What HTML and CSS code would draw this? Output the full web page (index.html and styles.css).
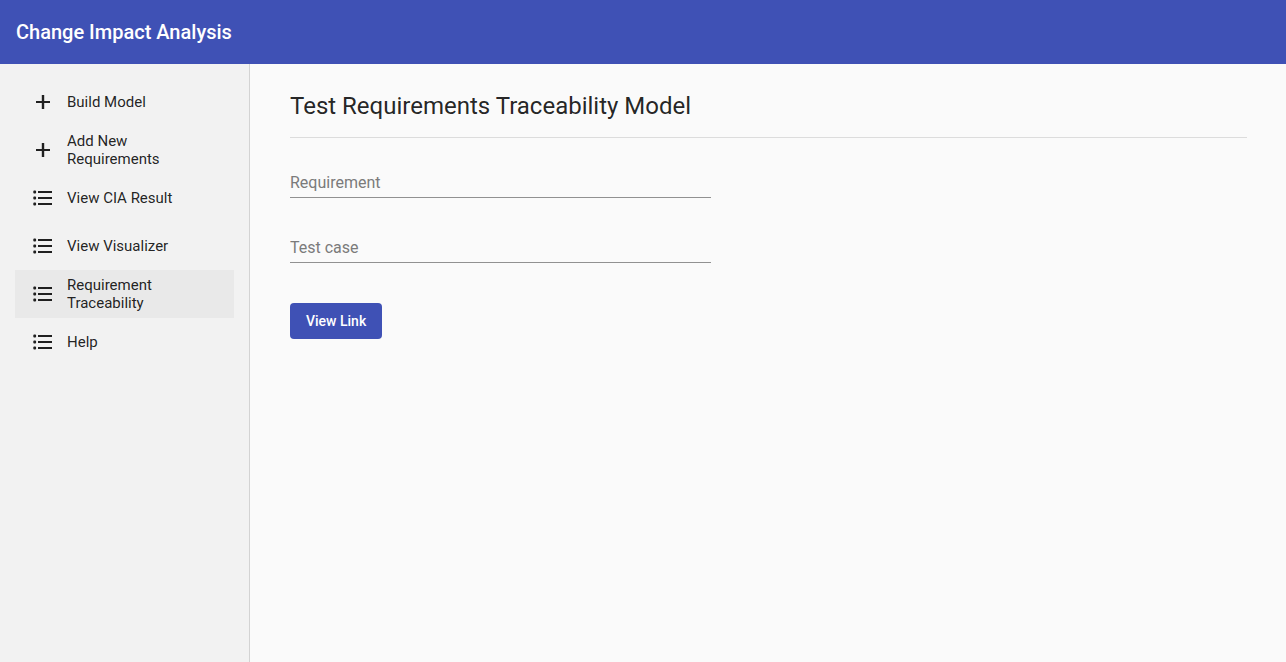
FILE: index.html
```
<!DOCTYPE html>
<html lang="en">
<head>
<meta charset="utf-8">
<meta name="viewport" content="width=device-width, initial-scale=1">
<title>Change Impact Analysis</title>
<link rel="stylesheet" href="styles.css">
</head>
<body>
<svg class="sprite" aria-hidden="true">
  <symbol id="icon-add" viewBox="0 0 24 24"><path d="M19 13h-5.8v6h-2.4v-6H5v-2h5.800V5h2.400v6H19v2z"/></symbol>
  <symbol id="icon-list" viewBox="0 0 24 24"><path d="M2.300 5.200l.6-.7h1.600l.6.7v1.600l-.6.7H2.900l-.6-.7zm0 6l.6-.7h1.600l.6.7v1.600l-.6.7H2.900l-.6-.7zm0 6l.6-.7h1.600l.6.7v1.600l-.6.7H2.900l-.6-.7zM7 19h14v-2H7v2zm0-6h14v-2H7v2zm0-8v2h14V5H7z"/></symbol>
</svg>
<header class="toolbar">
  <h1 class="toolbar-title">Change Impact Analysis</h1>
</header>
<div class="layout">
  <nav class="sidenav" aria-label="Main">
    <a class="nav-item" href="#build"><svg class="icon" aria-hidden="true"><use href="#icon-add"/></svg><span class="nav-label">Build Model</span></a>
    <a class="nav-item" href="#add"><svg class="icon" aria-hidden="true"><use href="#icon-add"/></svg><span class="nav-label">Add New Requirements</span></a>
    <a class="nav-item" href="#result"><svg class="icon" aria-hidden="true"><use href="#icon-list"/></svg><span class="nav-label">View CIA Result</span></a>
    <a class="nav-item" href="#visualizer"><svg class="icon" aria-hidden="true"><use href="#icon-list"/></svg><span class="nav-label">View Visualizer</span></a>
    <a class="nav-item nav-item-active" href="#traceability" aria-current="page"><svg class="icon" aria-hidden="true"><use href="#icon-list"/></svg><span class="nav-label">Requirement Traceability</span></a>
    <a class="nav-item" href="#help"><svg class="icon" aria-hidden="true"><use href="#icon-list"/></svg><span class="nav-label">Help</span></a>
  </nav>
  <main class="content">
    <h2 class="page-title">Test Requirements Traceability Model</h2>
    <form class="trace-form">
      <input class="field" type="text" placeholder="Requirement" aria-label="Requirement">
      <input class="field" type="text" placeholder="Test case" aria-label="Test case">
      <button class="button" type="button">View Link</button>
    </form>
  </main>
</div>
</body>
</html>
```
FILE: styles.css
```
* { box-sizing: border-box; }

body {
  display: flex;
  flex-direction: column;
  min-height: 100vh;
  margin: 0;
  background: #fafafa;
  color: rgba(0, 0, 0, 0.87);
  font-family: Roboto, sans-serif;
}

.sprite { display: none; }

.toolbar {
  display: flex;
  align-items: center;
  height: 64px;
  padding: 0 16px;
  background: #3f51b5;
  color: #fff;
}

.toolbar-title {
  margin: 0;
  font-size: 20px;
  font-weight: 500;
  line-height: 32px;
}

.layout {
  display: flex;
  flex: 1;
}

.sidenav {
  flex: none;
  width: 250px;
  padding: 14px 15px;
  border-right: 1px solid #d3d3d3;
  background: #f2f2f2;
}

.nav-item {
  display: flex;
  align-items: center;
  gap: 12px;
  height: 48px;
  padding: 0 16px;
  color: inherit;
  font-size: 15px;
  line-height: 18px;
  text-decoration: none;
}

.nav-item-active { background: #e9e9e9; }

.icon {
  flex: none;
  width: 24px;
  height: 24px;
  fill: currentColor;
}

.nav-label { max-width: 120px; }

.content {
  flex: 1;
  padding: 26px 39px 26px 40px;
}

.page-title {
  margin: 0;
  padding-bottom: 15px;
  border-bottom: 1px solid #dcdcdc;
  font-size: 24px;
  font-weight: 400;
  line-height: 32px;
}

.trace-form {
  display: flex;
  flex-direction: column;
  align-items: flex-start;
  width: 44%;
  padding-top: 30px;
}

.field {
  width: 100%;
  height: 30px;
  margin-bottom: 35px;
  padding: 0;
  border: 0;
  border-bottom: 1px solid #919191;
  border-radius: 0;
  background: transparent;
  color: inherit;
  font: 16px/20px Roboto, sans-serif;
}

.field:focus {
  border-bottom-color: #3f51b5;
  outline: 0;
}

.field::placeholder {
  color: #7b7b7b;
  opacity: 1;
}

.button {
  margin-top: 5px;
  padding: 0 16px;
  border: 0;
  border-radius: 4px;
  background: #3f51b5;
  color: #fff;
  font: 500 14px/36px Roboto, sans-serif;
}
```
